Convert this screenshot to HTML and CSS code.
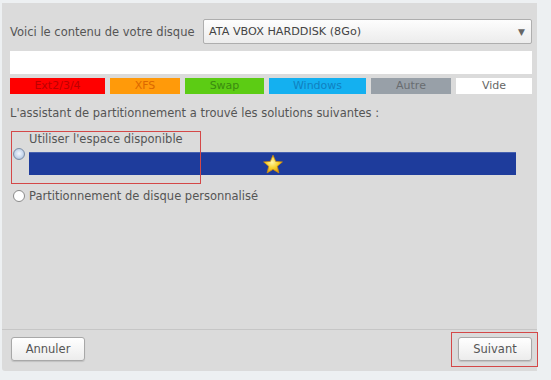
FILE: index.html
```html
<!DOCTYPE html>
<html lang="fr">
<head>
    <meta charset="UTF-8">
    <title>Partitionnement</title>
    <link rel="stylesheet" href="styles.css">
</head>
<body>
    <div class="window">
        <div class="disk-row">
            <span class="label">Voici le contenu de votre disque</span>
            <div class="combo">
                <span>ATA VBOX HARDDISK (8Go)</span>
                <span class="arrow">&#9660;</span>
            </div>
        </div>

        <div class="disk-bar"></div>

        <div class="legend">
            <div class="part ext">Ext2/3/4</div>
            <div class="part xfs">XFS</div>
            <div class="part swap">Swap</div>
            <div class="part win">Windows</div>
            <div class="part other">Autre</div>
            <div class="part empty">Vide</div>
        </div>

        <p class="intro">L'assistant de partitionnement a trouvé les solutions suivantes :</p>

        <div class="option first">
            <span class="radio checked"></span>
            <div class="option-body">
                <span class="label">Utiliser l'espace disponible</span>
                <div class="solution-bar">
                    <svg class="star" width="22" height="21" viewBox="0 0 22 21">
                        <defs>
                            <radialGradient id="starFill" cx="45%" cy="40%" r="60%">
                                <stop offset="0" stop-color="#fff7a8"/>
                                <stop offset="0.55" stop-color="#f7d22c"/>
                                <stop offset="1" stop-color="#e0a010"/>
                            </radialGradient>
                        </defs>
                        <path d="M11 1.2 L13.7 7.4 L20.4 7.9 L15.3 12.3 L16.9 18.9 L11 15.4 L5.1 18.9 L6.7 12.3 L1.6 7.9 L8.3 7.4 Z" fill="url(#starFill)" stroke="#c98a12" stroke-width="0.8" stroke-linejoin="round"/>
                    </svg>
                </div>
            </div>
            <div class="highlight"></div>
        </div>

        <div class="option second">
            <span class="radio"></span>
            <span class="label">Partitionnement de disque personnalisé</span>
        </div>

        <div class="spacer"></div>

        <div class="buttons">
            <button>Annuler</button>
            <div class="next-wrap">
                <button>Suivant</button>
                <div class="highlight"></div>
            </div>
        </div>
    </div>
</body>
</html>
```

FILE: styles.css
```css
body {
    margin: 0;
    background: #edf0f2;
    font-family: "DejaVu Sans", "Noto Sans", sans-serif;
    font-size: 11.5px;
    color: #555;
}
.window {
    margin: 3px 14px 0 2px;
    height: 368px;
    background: #dbdbdb;
    padding: 0 5px 0 8px;
    box-sizing: border-box;
    display: flex;
    flex-direction: column;
    border-bottom-left-radius: 3px;
}
.disk-row {
    display: flex;
    align-items: center;
    justify-content: space-between;
    margin-top: 16px;
}
.combo {
    width: 329px;
    height: 25px;
    border: 1px solid #aeaeae;
    border-radius: 2px;
    background: linear-gradient(#fdfdfd, #ececec);
    display: flex;
    align-items: center;
    justify-content: space-between;
    padding: 0 6px 0 5px;
    box-sizing: border-box;
    color: #444;
    font-size: 11.2px;
}
.combo .arrow {
    font-size: 9px;
    color: #666;
}
.disk-bar {
    height: 23px;
    margin-top: 7px;
    background: #fff;
}
.legend {
    display: flex;
    gap: 5px;
    margin-top: 4px;
}
.part {
    height: 16px;
    line-height: 16px;
    text-align: center;
    font-size: 11px;
}
.ext { width: 95px; background: #ff0000; color: #bd0000; }
.xfs { width: 70px; background: #ff9a0a; color: #dc6800; }
.swap { width: 79px; background: #5ccc14; color: #3a8a10; }
.win { width: 97px; background: #14b0f0; color: #1080c0; }
.other { width: 80px; background: #98a0a8; color: #686c70; }
.empty { width: 76px; background: #fff; color: #666; }
.intro {
    margin: 12px 0 0 0;
    line-height: 14px;
}
.option {
    position: relative;
    display: flex;
    align-items: center;
    line-height: 14px;
}
.option.first {
    margin-top: 12px;
}
.option.second {
    margin-top: 14px;
}
.option-body {
    flex: 1;
    margin-right: 16px;
}
.option-body .label {
    display: block;
    margin-bottom: 6px;
}
.radio {
    width: 10px;
    height: 10px;
    border-radius: 50%;
    border: 1px solid #8a8a8a;
    background: #fff;
    margin: 0 4px 0 3px;
    flex-shrink: 0;
}
.radio.checked {
    border-color: #7d8ea6;
    background: radial-gradient(circle at 50% 45%, #f4f8ff 0, #c6d6ec 55%, #8fa6c6 100%);
}
.solution-bar {
    height: 23px;
    background: #1e3c9c;
    border-top: 1px solid #4560b0;
    display: flex;
    align-items: center;
    justify-content: center;
    box-sizing: border-box;
}
.star {
    display: block;
    margin-left: 1px;
}
.highlight {
    position: absolute;
    border: 1px solid #d44848;
    pointer-events: none;
}
.option.first .highlight {
    left: 1px;
    top: -1px;
    width: 188px;
    height: 51px;
}
.spacer {
    flex: 1;
    border-bottom: 1px solid #c6c6c6;
    margin: 0 -5px 0 -8px;
}
.buttons {
    display: flex;
    justify-content: space-between;
    margin-top: 7px;
    margin-bottom: 10px;
}
button {
    width: 74px;
    height: 24px;
    font-family: inherit;
    font-size: 11.5px;
    color: #555;
    border: 1px solid #a8a8a8;
    border-radius: 3px;
    background: linear-gradient(#ffffff, #ececec);
    box-shadow: 0 1px 1px rgba(0, 0, 0, 0.12);
    margin-left: 1px;
}
.next-wrap {
    position: relative;
}
.next-wrap button {
    margin: 0;
}
.next-wrap .highlight {
    left: -7px;
    top: -5px;
    width: 85px;
    height: 33px;
}
```
